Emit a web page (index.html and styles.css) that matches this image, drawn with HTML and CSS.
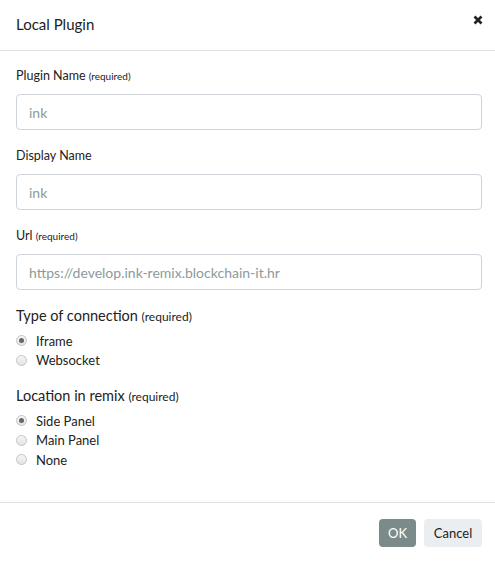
FILE: index.html
```html
<!DOCTYPE html>
<html>
<head>
<meta charset="utf-8">
<link rel="stylesheet" href="styles.css">
</head>
<body>
<div class="modal">
  <div class="modal-header">
    <h5 class="modal-title">Local Plugin</h5>
    <span class="close" aria-label="Close">
      <svg width="10" height="10" viewBox="0 0 10 10"><path d="M1.5 1.5 L8.5 8.5 M8.5 1.5 L1.5 8.5" stroke="#222" stroke-width="2.6" stroke-linecap="butt"/></svg>
    </span>
  </div>
  <div class="modal-body">
    <div class="form-group">
      <label class="field-label">Plugin Name <small>(required)</small></label>
      <input class="form-control" type="text" placeholder="ink">
    </div>
    <div class="form-group">
      <label class="field-label">Display Name</label>
      <input class="form-control" type="text" placeholder="ink">
    </div>
    <div class="form-group last">
      <label class="field-label">Url <small>(required)</small></label>
      <input class="form-control" type="text" placeholder="https://develop.ink-remix.blockchain-it.hr">
    </div>
    <div class="radio-group">
      <h6 class="group-title">Type of connection <small>(required)</small></h6>
      <label class="radio"><input type="radio" name="type" checked><span>Iframe</span></label>
      <label class="radio"><input type="radio" name="type"><span>Websocket</span></label>
    </div>
    <div class="radio-group">
      <h6 class="group-title">Location in remix <small>(required)</small></h6>
      <label class="radio"><input type="radio" name="loc" checked><span>Side Panel</span></label>
      <label class="radio"><input type="radio" name="loc"><span>Main Panel</span></label>
      <label class="radio"><input type="radio" name="loc"><span>None</span></label>
    </div>
  </div>
  <div class="modal-footer">
    <button class="btn btn-ok">OK</button>
    <button class="btn btn-cancel">Cancel</button>
  </div>
</div>
</body>
</html>
```
FILE: styles.css
```css
* { box-sizing: border-box; }
html, body { margin: 0; padding: 0; background: #fff; }
body {
  font-family: Lato, "Noto Sans", sans-serif;
  color: #222;
  font-size: 12px;
}
.modal { width: 495px; }
.modal-header {
  height: 51px;
  display: flex;
  align-items: center;
  justify-content: space-between;
  padding: 0 12px 4px 16px;
  border-bottom: 1px solid #dee2e6;
}
.modal-title {
  margin: 0;
  font-size: 15px;
  font-weight: 400;
  line-height: 22px;
  padding-top: 1px;
}
.close { display: flex; margin-top: -6px; }
.modal-body { padding: 16px 13px 16px 16px; }
.form-group { margin-bottom: 17px; }
.form-group.last { margin-bottom: 16px; }
.field-label {
  display: block;
  font-size: 12.5px;
  line-height: 18px;
  margin-bottom: 9px;
}
.field-label small { font-size: 10px; }
.group-title small { font-size: 12px; }
.form-control {
  display: block;
  width: 100%;
  height: 36px;
  border: 1px solid #ced4da;
  border-radius: 4px;
  padding: 0 12px;
  font-family: Lato, sans-serif;
  font-size: 14px;
  color: #333;
  outline: none;
}
.form-control::placeholder { color: #8d9a9a; }
.radio-group { margin-bottom: 16px; }
.group-title {
  margin: 0 0 4px;
  font-size: 14.5px;
  font-weight: 400;
  line-height: 20px;
}
.radio {
  display: flex;
  align-items: center;
  height: 19.5px;
  font-size: 13px;
}
.radio input {
  appearance: none;
  -webkit-appearance: none;
  margin: 0 9px 0 0;
  width: 11px;
  height: 11px;
  border-radius: 50%;
  border: 1px solid #c4c4c4;
  background: linear-gradient(#f6f6f6, #e4e4e4);
  position: relative;
}
.radio input:checked::after {
  content: "";
  position: absolute;
  left: 2px; top: 2px;
  width: 5px; height: 5px;
  border-radius: 50%;
  background: #666;
}
.modal-footer {
  border-top: 1px solid #dee2e6;
  padding: 16px 13px 16px 16px;
  display: flex;
  justify-content: flex-end;
  gap: 8px;
}
.btn {
  height: 28px;
  border: none;
  border-radius: 4px;
  font-family: Lato, sans-serif;
  font-size: 13px;
  padding: 0;
}
.btn-ok { background: #7b8b8a; color: #fff; width: 37px; }
.btn-cancel { background: #ebeef0; color: #222; width: 58px; }
```
